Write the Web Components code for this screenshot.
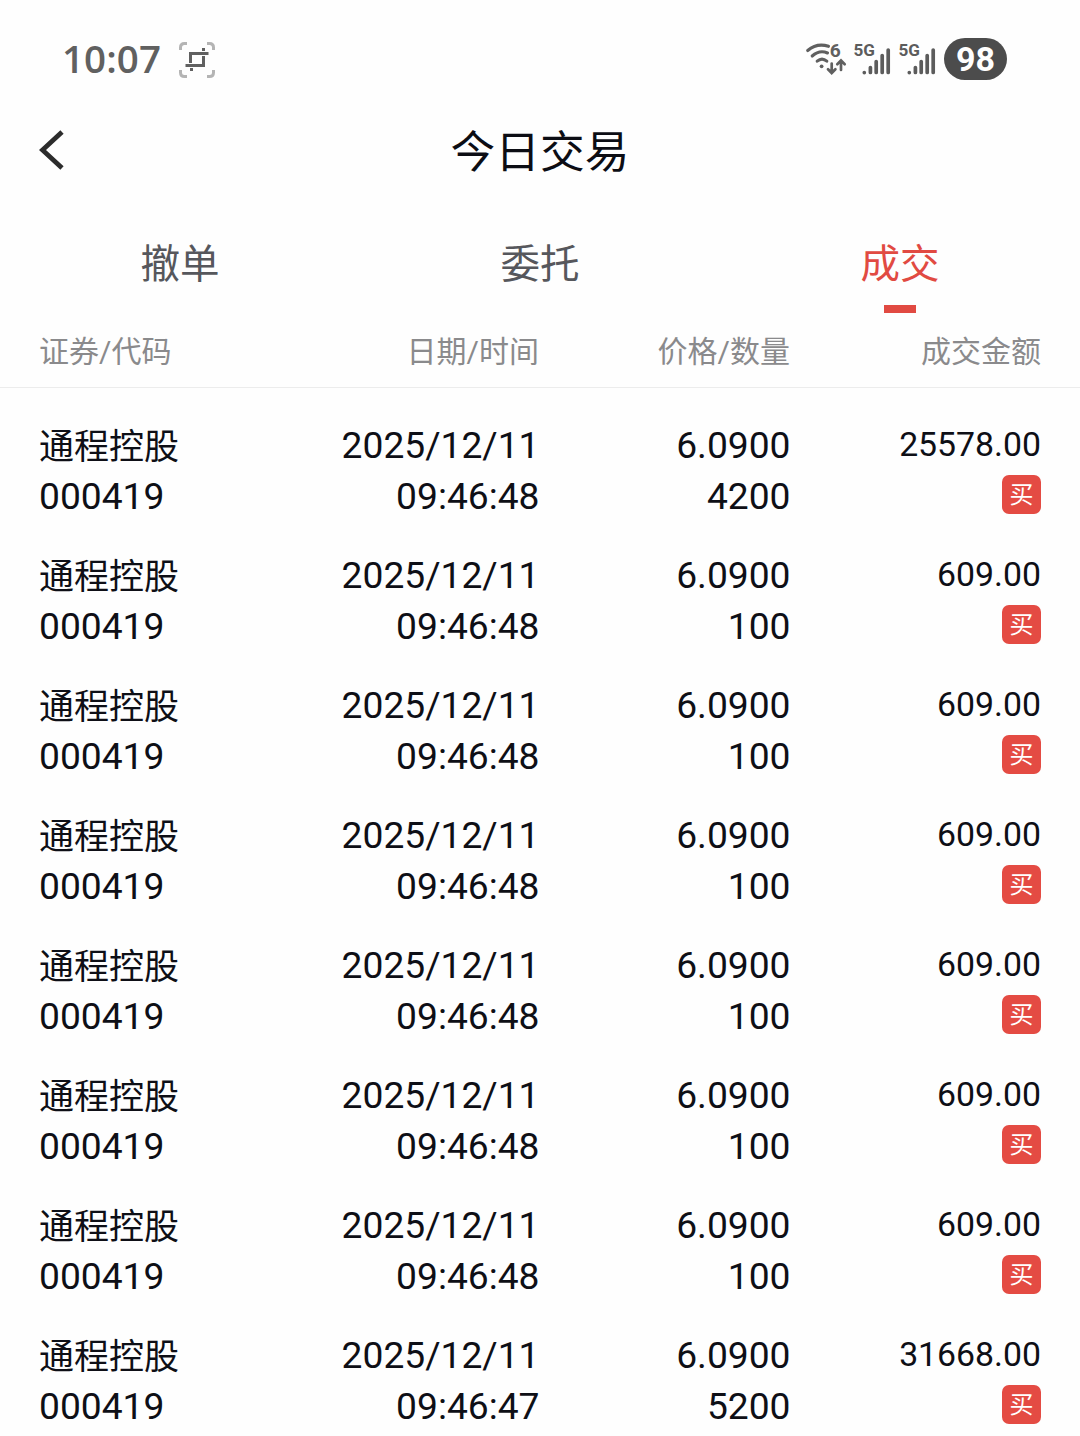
<!DOCTYPE html>
<html lang="zh-CN">
<head>
<meta charset="utf-8">
<meta name="viewport" content="width=device-width">
<title>今日交易</title>
<style>
html,body{margin:0;background:#fefefe}
body{width:1080px;height:1436px;overflow:hidden}
</style>
</head>
<body>
<trade-app></trade-app>
<script>
const CJK = '"Noto Sans CJK SC", sans-serif';
function define(name, html, after) {
  const t = document.createElement('template');
  t.innerHTML = html;
  customElements.define(name, class extends HTMLElement {
    constructor() {
      super();
      this.attachShadow({ mode: 'open' }).append(t.content.cloneNode(true));
    }
    connectedCallback() { if (after) after(this, this.shadowRoot); }
  });
}

define('cell-signal', `
<style>:host{display:block;width:37px;height:36px}svg{display:block;overflow:visible}
text{font:700 17px Roboto,sans-serif;fill:#5c5c5c}</style>
<svg width="37" height="36" viewBox="0 0 37 36">
<text x="-.5" y="14.700" textLength="21.500" lengthAdjust="spacingAndGlyphs">5G</text>
<g stroke="#5c5c5c" stroke-width="3.700" stroke-linecap="round"><path d="M10.300 31.500v.1M16.400 26.500v5M22.200 20.500v11M28.200 14.500v17M34.200 9v22.500"/></g>
</svg>`);

define('status-bar', `
<style>
:host{display:flex;height:100px;box-sizing:border-box;padding:38px 73px 20px 62px;align-items:flex-start;color:#606060}
svg{display:block;overflow:visible}
.crop{margin:3.500px 0 0 18.500px}
.right{display:flex;margin-left:auto}
.wifi{margin:4px 8px 0 0}
cell-signal{margin:3px 8px 0 0}
.clock{font:600 38.500px "Open Sans",sans-serif;fill:#606060}
.battery{width:63px;height:42px;border-radius:21px;background:#4c4c4c;color:#fff;font:700 34px/43px Roboto,sans-serif;text-align:center}
.six{font:700 18px Roboto,sans-serif;fill:#606060}
</style>
<svg width="98" height="42"><text class="clock" x="0" y="35" textLength="99">10:07</text></svg>
<svg class="crop" width="36" height="36" viewBox="0 0 36 36" fill="none">
<g stroke="#b4b4b4" stroke-width="3"><path d="M1.500 8V5.500Q1.500 1.500 5.500 1.500H8M28 1.500h2.500Q34.500 1.500 34.500 5.500V8M34.500 28v2.500Q34.500 34.500 30.500 34.500H28M8 34.500H5.500Q1.500 34.500 1.500 30.500V28"/></g>
<g stroke="#606060" stroke-width="3"><path d="M11.500 21V11.500H29.500M6.500 23.500H24.500V14M24.500 6v3M12.500 26v3"/></g>
</svg>
<div class="right">
<svg class="wifi" width="40" height="36" viewBox="0 0 40 36" fill="none" stroke="#606060" stroke-width="3.100" stroke-linecap="round">
<path d="M1.700 8.500Q11 .5 22.500 4.300M6.200 14Q13.500 7.500 21.500 11M11.200 19.200Q16 15 20.800 19.200"/>
<circle cx="15.600" cy="24.300" r="1.900" fill="#606060" stroke="none"/>
<text class="six" stroke="none" x="23.700" y="14.800" textLength="11" lengthAdjust="spacingAndGlyphs">6</text>
<path stroke-width="2.700" d="M25.700 21.500v9M22 27.200l3.700 3.800 3.700-3.800M35 28V19M31.300 22.200l3.700-3.800 3.700 3.800"/>
</svg>
<cell-signal></cell-signal><cell-signal></cell-signal>
<div class="battery">98</div>
</div>`);

define('nav-header', `
<style>
:host{display:grid;grid-template-columns:1fr auto 1fr;height:104px;box-sizing:border-box;padding:0 39px;color:#0c0d14}
svg{display:block;margin-top:29px}
h1{margin:16px 0 0;font:400 44.700px/66px ${CJK}}
</style>
<svg width="26" height="42" viewBox="0 0 26 42" fill="none" stroke="#2c2c2c" stroke-width="4.800"><path d="M23 3L3.500 21L23 39"/></svg>
<h1><slot></slot></h1>`);

define('tab-item', `
<style>
:host{display:flex;flex:1;flex-direction:column;align-items:center;color:#56575c;font:400 39.500px/58px ${CJK}}
i{width:32px;height:8px;margin-top:15px}
:host([active]){color:#e14a42}
:host([active]) i{background:#e14a42}
</style><span><slot></slot></span><i></i>`);

define('tab-bar', `
<style>:host{display:flex;height:120px;box-sizing:border-box;padding-top:28px}</style><slot></slot>`);

define('column-heads', `
<style>
:host{display:grid;grid-template-columns:250px 250px 251px 251px;height:64px;box-sizing:border-box;padding:3px 39px 0;border-bottom:1px solid #ececec;color:#8a8a8c;font:400 30px/44px ${CJK};text-align:right}
::slotted(:first-child){text-align:left}
</style><slot></slot>`);

define('buy-badge', `
<style>:host{display:block;width:39px;height:39px;border-radius:7px;background:#e44b43;color:#fff;font:400 24px/35px ${CJK};text-align:center}</style><slot></slot>`);

define('trade-row', `
<style>
:host{display:grid;grid-template-columns:250px 250.500px 251px 250.500px;height:130px;box-sizing:border-box;padding:14px 39px;color:#0e0f16;font:400 37.200px/51px Roboto,sans-serif;text-align:right}
div{display:flex;flex-direction:column}
.l{text-align:left}
.name{font:400 35px/47px ${CJK};padding-bottom:4px}
.amt{font-size:33.800px;line-height:49px}
buy-badge{align-self:flex-end;margin-top:6px}
</style>
<div class="l"><span class="name"></span><span class="code"></span></div>
<div><span class="date"></span><span class="time"></span></div>
<div><span class="price"></span><span class="qty"></span></div>
<div><span class="amt"></span><buy-badge>买</buy-badge></div>`,
(el, root) => {
  for (const k of ['name', 'code', 'date', 'time', 'price', 'qty', 'amt'])
    root.querySelector('.' + k).textContent = el.getAttribute(k);
});

define('trade-list', `<style>:host{display:block;padding-top:18px}</style>`, (el, root) => {
  const rows = [['4200', '25578.00', '09:46:48'],
    ...Array.from({ length: 6 }, () => ['100', '609.00', '09:46:48']),
    ['5200', '31668.00', '09:46:47']];
  for (const [qty, amt, time] of rows) {
    const r = document.createElement('trade-row');
    const data = { name: '通程控股', code: '000419', date: '2025/12/11', time, price: '6.0900', qty, amt };
    for (const k in data) r.setAttribute(k, data[k]);
    root.append(r);
  }
});

define('trade-app', `
<style>:host{display:flex;flex-direction:column;width:1080px;height:1436px;overflow:hidden;background:#fefefe}
:host>*{flex:none}
b{font:400 30px/1 Roboto,sans-serif}</style>
<status-bar></status-bar>
<nav-header>今日交易</nav-header>
<tab-bar><tab-item>撤单</tab-item><tab-item>委托</tab-item><tab-item active>成交</tab-item></tab-bar>
<column-heads><span>证券<b>/</b>代码</span><span>日期<b>/</b>时间</span><span>价格<b>/</b>数量</span><span>成交金额</span></column-heads>
<trade-list></trade-list>`);
</script>
</body>
</html>
